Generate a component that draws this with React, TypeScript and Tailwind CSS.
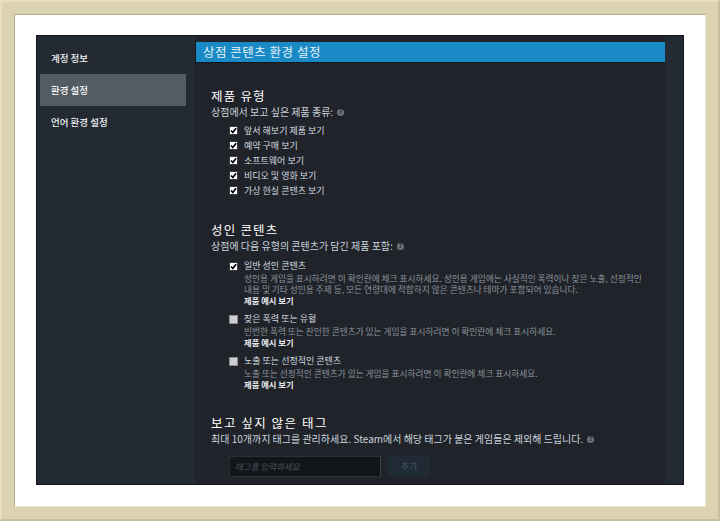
import React from "react";

function Box({ checked }: { checked: boolean }) {
  return (
    <svg width="9" height="9" viewBox="0 0 9 9" className="shrink-0">
      <rect x="0.5" y="0.5" width="8" height="8" fill={checked ? "#ffffff" : "#cfcfcf"} stroke={checked ? "#3a3a3a" : "#8a8a8a"} strokeWidth="1" />
      {checked && <path d="M2 4.5 L3.8 6.5 L7.1 2.2" fill="none" stroke="#000" strokeWidth="1.7" />}
    </svg>
  );
}

function Q() {
  return (
    <span className="ml-[4px] inline-flex h-[7px] w-[7px] items-center justify-center rounded-full bg-[#69737c] text-[6px] font-bold leading-none text-[#23272c] align-middle">
      ?
    </span>
  );
}

const productItems = [
  "앞서 해보기 제품 보기",
  "예약 구매 보기",
  "소프트웨어 보기",
  "비디오 및 영화 보기",
  "가상 현실 콘텐츠 보기",
];

const adultItems = [
  {
    checked: true,
    label: "일반 성인 콘텐츠",
    desc: [
      "성인용 게임을 표시하려면 이 확인란에 체크 표시하세요. 성인용 게임에는 사실적인 폭력이나 잦은 노출, 선정적인",
      "내용 및 기타 성인용 주제 등, 모든 연령대에 적합하지 않은 콘텐츠나 테마가 포함되어 있습니다.",
    ],
  },
  {
    checked: false,
    label: "잦은 폭력 또는 유혈",
    desc: ["빈번한 폭력 또는 잔인한 콘텐츠가 있는 게임을 표시하려면 이 확인란에 체크 표시하세요."],
  },
  {
    checked: false,
    label: "노출 또는 선정적인 콘텐츠",
    desc: ["노출 또는 선정적인 콘텐츠가 있는 게임을 표시하려면 이 확인란에 체크 표시하세요."],
  },
];

export default function App() {
  return (
    <div className="h-[521px] w-[720px] border-[2px] border-t-[#e6dfc4] border-l-[#e6dfc4] border-r-[#c9bf9c] border-b-[#c9bf9c] bg-[#dcd3b1] p-[12px] [font-family:'Noto_Sans_CJK_KR','Noto_Sans',sans-serif]">
      <div className="h-[493px] w-[692px] border border-t-[#b9ae88] border-l-[#b9ae88] border-r-[#ece6d0] border-b-[#ece6d0] bg-white pl-[21px] pt-[20px]">
        <div className="flex h-[450px] w-[648px] border border-[#15181c] bg-[#232a33]">
          {/* sidebar */}
          <div className="flex w-[158px] shrink-0 flex-col pl-[3px] pt-[6px]">
            <div className="flex h-[32px] w-[146px] items-center pl-[11px] text-[9.5px] font-medium text-[#f2f4f6]">계정 정보</div>
            <div className="flex h-[32px] w-[146px] items-center bg-[#545c63] pl-[11px] text-[9.5px] font-medium text-white">환경 설정</div>
            <div className="flex h-[32px] w-[146px] items-center pl-[11px] text-[9.5px] font-medium text-[#f2f4f6]">언어 환경 설정</div>
          </div>
          {/* main */}
          <div className="flex w-[470px] shrink-0 flex-col bg-[#202329] pt-[6px]">
            <div className="flex h-[21px] items-center border-b border-l border-[#0f161d] bg-[#1a8ac6] pl-[7px] text-[12.5px] tracking-[0.5px] text-[#e8f2f8]">
              상점 콘텐츠 환경 설정
            </div>
            <div className="flex flex-col pl-[16px]">
              <div className="mt-[24px] text-[12.5px] leading-[18px] tracking-[1.2px] text-white">제품 유형</div>
              <div className="flex items-center text-[10px] leading-[14px] text-[#c9d3dc]">
                상점에서 보고 싶은 제품 종류:<Q />
              </div>
              <div className="mt-[4px] flex flex-col pl-[18px]">
                {productItems.map((t) => (
                  <div key={t} className="flex h-[15px] items-center gap-[6px] text-[9px] text-[#d4dae0]">
                    <Box checked />
                    <span>{t}</span>
                  </div>
                ))}
              </div>

              <div className="mt-[23px] text-[12.5px] leading-[18px] tracking-[1.2px] text-white">성인 콘텐츠</div>
              <div className="flex items-center text-[10px] leading-[14px] text-[#c9d3dc]">
                상점에 다음 유형의 콘텐츠가 담긴 제품 포함:<Q />
              </div>
              <div className="flex flex-col pl-[18px]">
                {adultItems.map((a) => (
                  <div key={a.label} className="mt-[6px] flex flex-col">
                    <div className="flex h-[14px] items-center gap-[6px] text-[9px] text-[#d4dae0]">
                      <Box checked={a.checked} />
                      <span>{a.label}</span>
                    </div>
                    <div className="flex flex-col pl-[15px]">
                      {a.desc.map((d) => (
                        <div key={d} className="whitespace-nowrap text-[8.7px] leading-[11px] text-[#8b949c]">{d}</div>
                      ))}
                      <div className="text-[8.3px] font-bold leading-[11px] text-[#e6eaee]">제품 예시 보기</div>
                    </div>
                  </div>
                ))}
              </div>

              <div className="mt-[24px] text-[12.5px] leading-[18px] tracking-[1.5px] text-white">보고 싶지 않은 태그</div>
              <div className="flex items-center whitespace-nowrap text-[10px] leading-[14px] text-[#c9d3dc]">
                최대 10개까지 태그를 관리하세요. Steam에서 해당 태그가 붙은 게임들은 제외해 드립니다.<Q />
              </div>
              <div className="mt-[10px] flex pl-[18px]">
                <div className="flex h-[21px] w-[152px] items-center border border-[#2b3036] border-r-[#3a4048] bg-[#121519] pl-[5px] text-[8.5px] italic text-[#4c535b]">
                  태그를 입력하세요
                </div>
                <div className="ml-[7px] flex h-[21px] w-[42px] items-center justify-center bg-[#1f2a35] text-[9px] text-[#3f5568]">
                  추가
                </div>
              </div>
            </div>
          </div>
          <div className="flex-1" />
        </div>
      </div>
    </div>
  );
}
